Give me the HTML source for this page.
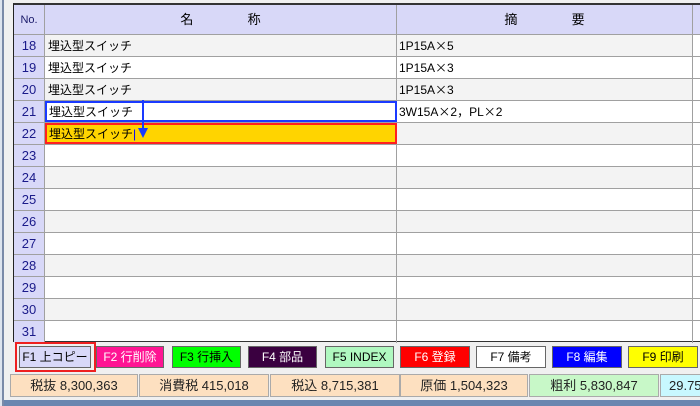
<!DOCTYPE html>
<html><head><meta charset="utf-8"><style>
*{margin:0;padding:0;box-sizing:border-box}
body{width:700px;height:406px;background:#f0f0f0;position:relative;overflow:hidden;font-family:"Liberation Sans","Noto Sans CJK JP",sans-serif;font-size:12px;color:#000}
.abs{position:absolute}
.grid{left:13px;top:3px;width:687px;height:339px;border-left:1px solid #222;border-top:2px solid #333;border-bottom:1px solid #333;background:#fff}
.row{position:absolute;left:0;width:686px;height:22px;border-bottom:1px solid #a0a0a0}
.no{position:absolute;left:0;width:31px;height:100%;background:#d8d8f8;border-right:1px solid #a0a0a0;color:#1a1a8a;font-size:13px;text-align:center;line-height:22px}
.nm{position:absolute;left:31px;width:352px;height:100%;border-right:1px solid #a0a0a0;padding-left:3px;line-height:22px}
.sm{position:absolute;left:383px;width:296px;height:100%;border-right:1px solid #a0a0a0;padding-left:2px;line-height:22px}
.g .nm,.g .sm{background:#f3f3f3}
.x{font-family:"Noto Sans CJK JP",sans-serif}
.btn{position:absolute;top:346px;height:22px;border:1px solid #666;text-align:center;line-height:20px;font-size:12px;white-space:nowrap;overflow:hidden}
.st{position:absolute;top:374px;height:23px;border:1px solid #aaa;text-align:center;line-height:21px;font-size:13px;color:#222;white-space:nowrap;overflow:hidden}
</style></head><body>
<div class="abs" style="left:0;top:0;width:2px;height:406px;background:#dde4ee"></div>
<div class="abs" style="left:2px;top:0;width:2px;height:406px;background:#7a8aa8"></div>
<div class="abs" style="left:4px;top:400px;width:696px;height:6px;background:#6a86b0"></div>
<div class="abs grid">
 <div class="row" style="top:0;height:30px;background:#d8d8f8">
  <div class="no" style="line-height:30px;font-size:11px;color:#1a1a6a">No.</div>
  <div class="nm" style="background:#d8d8f8;text-align:center;line-height:30px;font-size:13px;padding:0">名&nbsp;&nbsp;&nbsp;&nbsp;&nbsp;&nbsp;&nbsp;&nbsp;&nbsp;&nbsp;&nbsp;&nbsp;&nbsp;&nbsp;&nbsp;称</div>
  <div class="sm" style="background:#d8d8f8;text-align:center;line-height:30px;font-size:13px;padding:0">摘&nbsp;&nbsp;&nbsp;&nbsp;&nbsp;&nbsp;&nbsp;&nbsp;&nbsp;&nbsp;&nbsp;&nbsp;&nbsp;&nbsp;&nbsp;要</div>
 </div>
 <div class="row g" style="top:30px"><div class="no">18</div><div class="nm">埋込型スイッチ</div><div class="sm">1P15A<span class="x">×</span>5</div></div>
 <div class="row" style="top:52px"><div class="no">19</div><div class="nm">埋込型スイッチ</div><div class="sm">1P15A<span class="x">×</span>3</div></div>
 <div class="row g" style="top:74px"><div class="no">20</div><div class="nm">埋込型スイッチ</div><div class="sm">1P15A<span class="x">×</span>3</div></div>
 <div class="row" style="top:96px"><div class="no">21</div><div class="nm" style="border:2px solid #1a3aff;padding-left:2px;line-height:18px">埋込型スイッチ</div><div class="sm">3W15A<span class="x">×</span>2<span class="x">，</span>PL<span class="x">×</span>2</div></div>
 <div class="row g" style="top:118px"><div class="no">22</div><div class="nm" style="border:2px solid #ff2020;background:#ffd400;padding-left:2px;line-height:18px">埋込型スイッチ<span style="color:#00f">|</span></div><div class="sm"></div></div>
 <div class="row" style="top:140px"><div class="no">23</div><div class="nm"></div><div class="sm"></div></div>
 <div class="row g" style="top:162px"><div class="no">24</div><div class="nm"></div><div class="sm"></div></div>
 <div class="row" style="top:184px"><div class="no">25</div><div class="nm"></div><div class="sm"></div></div>
 <div class="row g" style="top:206px"><div class="no">26</div><div class="nm"></div><div class="sm"></div></div>
 <div class="row" style="top:228px"><div class="no">27</div><div class="nm"></div><div class="sm"></div></div>
 <div class="row g" style="top:250px"><div class="no">28</div><div class="nm"></div><div class="sm"></div></div>
 <div class="row" style="top:272px"><div class="no">29</div><div class="nm"></div><div class="sm"></div></div>
 <div class="row g" style="top:294px"><div class="no">30</div><div class="nm"></div><div class="sm"></div></div>
 <div class="row" style="top:316px;border-bottom:none"><div class="no">31</div><div class="nm"></div><div class="sm"></div></div>
</div>
<svg class="abs" style="left:136px;top:100px" width="14" height="40"><line x1="7" y1="0" x2="7" y2="30" stroke="#1a3aff" stroke-width="2"/><polygon points="2,28 12,28 7,38" fill="#1a3aff"/></svg>
<div class="abs" style="left:15px;top:342px;width:81px;height:30px;border:2px solid #ee2020"></div>
<div class="btn" style="left:19px;width:72px;background:#d8d8f8">F1 上コピー</div>
<div class="btn" style="left:96px;width:68px;background:#ff1493;color:#fff">F2 行削除</div>
<div class="btn" style="left:172px;width:69px;background:#00ff00">F3 行挿入</div>
<div class="btn" style="left:248px;width:69px;background:#3a0040;color:#fff">F4 部品</div>
<div class="btn" style="left:325px;width:69px;background:#b0f8c0">F5 INDEX</div>
<div class="btn" style="left:400px;width:70px;background:#ff0000;color:#fff">F6 登録</div>
<div class="btn" style="left:476px;width:70px;background:#fff">F7 備考</div>
<div class="btn" style="left:552px;width:70px;background:#0000ff;color:#fff">F8 編集</div>
<div class="btn" style="left:628px;width:70px;background:#ffff00">F9 印刷</div>
<div class="st" style="left:10px;width:128px;background:#fde0c0">税抜 8,300,363</div>
<div class="st" style="left:139px;width:130px;background:#fde0c0">消費税 415,018</div>
<div class="st" style="left:270px;width:130px;background:#fde0c0">税込 8,715,381</div>
<div class="st" style="left:400px;width:128px;background:#fde0c0">原価 1,504,323</div>
<div class="st" style="left:529px;width:130px;background:#c8f8c8">粗利 5,830,847</div>
<div class="st" style="left:660px;width:50px;background:#c8f8ff;text-align:left;padding-left:8px">29.75</div>
</body></html>
